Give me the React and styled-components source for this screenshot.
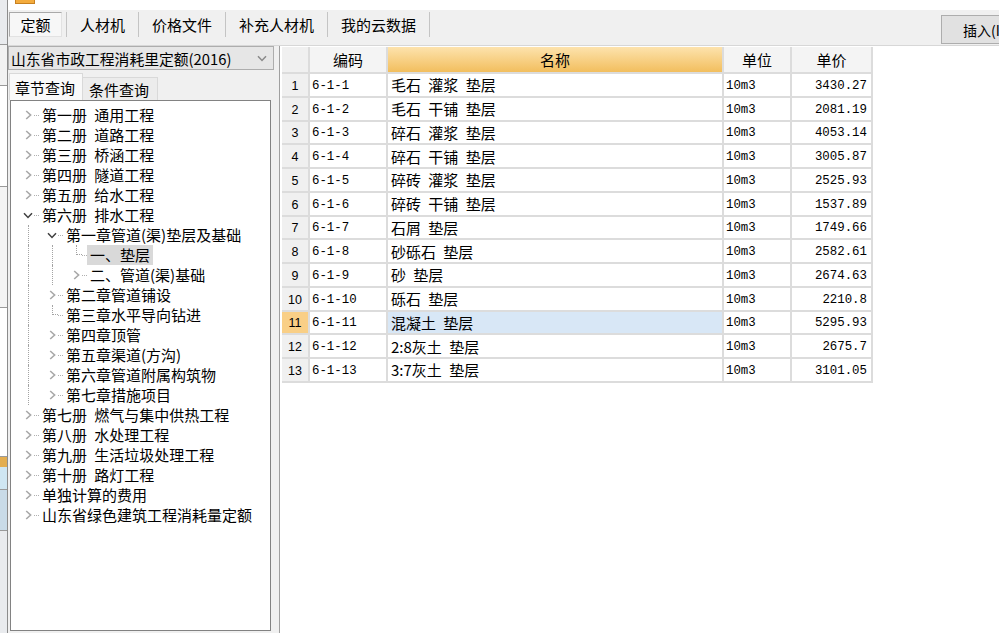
import React from "react";
import styled, { createGlobalStyle, css } from "styled-components";

const GlobalStyle = createGlobalStyle`
  html, body {
    margin: 0;
    padding: 0;
    overflow: hidden;
    background: #ffffff;
  }
  body {
    font-family: "Noto Sans CJK SC", "Noto Sans", sans-serif;
    color: #000;
  }
`;

const CJK = `"Noto Sans CJK SC", "Noto Sans", sans-serif`;
const MONO = `"Liberation Mono", "DejaVu Sans Mono", monospace`;

const Screen = styled.div`
  display: flex;
  width: 999px;
  height: 633px;
  overflow: hidden;
`;

const BackdropStrip = styled.div`
  width: 7px;
  flex-shrink: 0;
  display: flex;
  flex-direction: column;
  background: #e9ebee;
  border-right: 1px solid #8c8c8c;
`;

const StripBand = styled.div`
  height: ${({ $h }) => $h}px;
  flex-shrink: 0;
  background: ${({ $color }) => $color};
  border-bottom: ${({ $line }) => ($line ? "1px solid #9a9a9a" : "none")};
`;

const Dialog = styled.div`
  flex: 1;
  min-width: 0;
  display: flex;
  flex-direction: column;
`;

const TitleStrip = styled.div`
  height: 10px;
  flex-shrink: 0;
  background: #fff;
  padding-left: 7px;
`;

const AppIcon = styled.div`
  width: 18px;
  height: 3px;
  background: #f3ab3d;
  border: 1px solid #c7801f;
  border-top: none;
`;

const Toolbar = styled.div`
  height: 36px;
  flex-shrink: 0;
  display: flex;
  align-items: flex-start;
  padding: 2px 0 0 1px;
  box-sizing: border-box;
  background: #f0f0f0;
  border-bottom: 1px solid #d7d7d7;
  overflow: hidden;
`;

const ModeTab = styled.div`
  height: 25px;
  box-sizing: border-box;
  display: flex;
  align-items: center;
  justify-content: center;
  padding: 0 13px;
  font-family: ${CJK};
  font-size: 15px;
  white-space: nowrap;
  ${({ $active }) =>
    $active &&
    css`
      width: 53px;
      padding: 0;
      margin-right: 4px;
      background: #f7f7f7;
      border: 1px solid #a9a9a9;
      border-right-color: #e2e2e2;
      border-bottom-color: #e2e2e2;
    `}
`;

const TabDivider = styled.div`
  width: 1px;
  height: 25px;
  background: #c4c4c4;
  flex-shrink: 0;
`;

const InsertButton = styled.div`
  margin-left: auto;
  margin-top: 3px;
  margin-right: -24px;
  width: 82px;
  height: 29px;
  box-sizing: border-box;
  display: flex;
  align-items: center;
  padding-left: 21px;
  background: #e1e1e1;
  border: 1px solid #adadad;
  font-family: ${CJK};
  font-size: 14px;
  white-space: nowrap;
  flex-shrink: 0;
`;

const Body = styled.div`
  flex: 1;
  min-height: 0;
  display: flex;
`;

const LeftPanel = styled.div`
  width: 271px;
  flex-shrink: 0;
  display: flex;
  flex-direction: column;
  background: #f0f0f0;
  padding-right: 5px;
  box-sizing: border-box;
`;

const Select = styled.div`
  height: 24px;
  box-sizing: border-box;
  display: flex;
  align-items: center;
  justify-content: space-between;
  padding: 0 6px 0 2px;
  background: #e6e6e6;
  border: 1px solid #adadad;
  font-family: ${CJK};
  font-size: 14.8px;
  white-space: nowrap;
`;

const PanelTabs = styled.div`
  display: flex;
  align-items: flex-end;
  height: 27px;
  margin-top: 3px;
  padding-left: 1px;
`;

const PanelTab = styled.div`
  box-sizing: border-box;
  display: flex;
  align-items: center;
  font-family: ${CJK};
  font-size: 15px;
  white-space: nowrap;
  border: 1px solid #d9d9d9;
  border-bottom: none;
  ${({ $active }) =>
    $active
      ? css`
          height: 27px;
          padding: 0 7px 0 5px;
          background: #f9f9f9;
        `
      : css`
          height: 23px;
          padding: 0 8px 0 6px;
          background: #ececec;
          margin-left: -1px;
        `}
`;

const TabPage = styled.div`
  flex: 1;
  min-height: 0;
  display: flex;
  padding: 0 3px 2px 2px;
`;

const TreeBox = styled.div`
  flex: 1;
  background: #fff;
  border: 1px solid #828282;
  padding-top: 4px;
  overflow: hidden;
`;

const TreeRow = styled.div`
  height: 20px;
  display: flex;
  align-items: stretch;
  padding-left: 11px;
`;

const Guide = styled.div`
  width: 24px;
  flex-shrink: 0;
  &::before {
    content: "";
    display: ${({ $line }) => ($line ? "block" : "none")};
    margin-left: 6px;
    height: 100%;
    border-left: 1px dotted #a3a3a3;
  }
`;

const Toggle = styled.div`
  width: 12px;
  flex-shrink: 0;
  display: flex;
  align-items: center;
  justify-content: center;
`;

const LeafLink = styled.div`
  width: 12px;
  flex-shrink: 0;
  &::before {
    content: "";
    display: block;
    margin-left: 6px;
    height: 10px;
    border-left: 1px dotted #a3a3a3;
    border-bottom: 1px dotted #a3a3a3;
    box-sizing: border-box;
  }
`;

const Stub = styled.div`
  width: 5px;
  flex-shrink: 0;
  align-self: center;
  border-top: 1px dotted #b0b0b0;
`;

const TreeLabel = styled.div`
  padding: 0 3px;
  font-family: ${CJK};
  font-size: 15px;
  line-height: 20px;
  word-spacing: 4px;
  white-space: nowrap;
  background: ${({ $selected }) => ($selected ? "#d9d9d9" : "transparent")};
`;

const TablePanel = styled.div`
  flex: 1;
  min-width: 0;
  background: #fff;
  border-left: 1px solid #a0a0a0;
  padding: 1px 0 0 2px;
`;

const Grid = styled.div`
  display: grid;
  grid-template-columns: 28px 78px 336px 68px 81px;
  grid-template-rows: 27px repeat(13, 23.75px);
  align-content: start;
`;

const cellKinds = {
  rownum: css`
    justify-content: center;
    padding-top: 2px;
    background: #f0f0f0;
    font-family: "Liberation Sans", sans-serif;
    font-size: 12.5px;
  `,
  head: css`
    justify-content: center;
    background: #f4f4f4;
    font-family: ${CJK};
    font-size: 15px;
  `,
  headActive: css`
    justify-content: center;
    background: linear-gradient(#fde3ad, #f2be5e);
    font-family: ${CJK};
    font-size: 15px;
  `,
  mono: css`
    padding: 2px 0 0 2px;
    font-family: ${MONO};
    font-size: 12.4px;
  `,
  name: css`
    padding-left: 3px;
    font-family: ${CJK};
    font-size: 15px;
    word-spacing: 4px;
  `,
  price: css`
    justify-content: flex-end;
    padding: 2px 4px 0 0;
    font-family: ${MONO};
    font-size: 12.4px;
  `,
};

const Cell = styled.div`
  display: flex;
  align-items: center;
  box-sizing: border-box;
  white-space: nowrap;
  overflow: hidden;
  border-right: 2px solid #dcdcdc;
  border-bottom: 2px solid #dcdcdc;
  ${({ $kind }) => cellKinds[$kind]}
  ${({ $hl }) => $hl}
`;

const ChevronRight = () => (
  <svg width="7" height="10" viewBox="0 0 7 10">
    <polyline points="1.2,1 5.6,5 1.2,9" fill="none" stroke="#a8a8a8" strokeWidth="1.6" />
  </svg>
);

const ChevronDown = ({ color = "#404040" }) => (
  <svg width="10" height="7" viewBox="0 0 10 7">
    <polyline points="1,1.2 5,5.4 9,1.2" fill="none" stroke={color} strokeWidth="1.5" />
  </svg>
);

const tree = [
  { d: 0, t: "第一册 通用工程", c: "closed" },
  { d: 0, t: "第二册 道路工程", c: "closed" },
  { d: 0, t: "第三册 桥涵工程", c: "closed" },
  { d: 0, t: "第四册 隧道工程", c: "closed" },
  { d: 0, t: "第五册 给水工程", c: "closed" },
  { d: 0, t: "第六册 排水工程", c: "open" },
  { d: 1, g: [true], t: "第一章管道(渠)垫层及基础", c: "open" },
  { d: 2, g: [true, true], t: "一、垫层", c: "leaf", sel: true },
  { d: 2, g: [true, true], t: "二、管道(渠)基础", c: "closed" },
  { d: 1, g: [true], t: "第二章管道铺设", c: "closed" },
  { d: 1, g: [true], t: "第三章水平导向钻进", c: "leaf" },
  { d: 1, g: [true], t: "第四章顶管", c: "closed" },
  { d: 1, g: [true], t: "第五章渠道(方沟)", c: "closed" },
  { d: 1, g: [true], t: "第六章管道附属构筑物", c: "closed" },
  { d: 1, g: [true], t: "第七章措施项目", c: "closed" },
  { d: 0, t: "第七册 燃气与集中供热工程", c: "closed" },
  { d: 0, t: "第八册 水处理工程", c: "closed" },
  { d: 0, t: "第九册 生活垃圾处理工程", c: "closed" },
  { d: 0, t: "第十册 路灯工程", c: "closed" },
  { d: 0, t: "单独计算的费用", c: "closed" },
  { d: 0, t: "山东省绿色建筑工程消耗量定额", c: "closed" },
];

const rows = [
  ["6-1-1", "毛石 灌浆 垫层", "3430.27"],
  ["6-1-2", "毛石 干铺 垫层", "2081.19"],
  ["6-1-3", "碎石 灌浆 垫层", "4053.14"],
  ["6-1-4", "碎石 干铺 垫层", "3005.87"],
  ["6-1-5", "碎砖 灌浆 垫层", "2525.93"],
  ["6-1-6", "碎砖 干铺 垫层", "1537.89"],
  ["6-1-7", "石屑 垫层", "1749.66"],
  ["6-1-8", "砂砾石 垫层", "2582.61"],
  ["6-1-9", "砂 垫层", "2674.63"],
  ["6-1-10", "砾石 垫层", "2210.8"],
  ["6-1-11", "混凝土 垫层", "5295.93"],
  ["6-1-12", "2:8灰土 垫层", "2675.7"],
  ["6-1-13", "3:7灰土 垫层", "3101.05"],
];

const orangeCell = css`
  background: #f9cf86;
`;
const blueCell = css`
  background: #d8e7f6;
`;

const TreeItem = ({ item }) => (
  <TreeRow>
    {(item.g || []).map((line, i) => (
      <Guide key={i} $line={line} />
    ))}
    {item.c === "leaf" ? (
      <LeafLink />
    ) : (
      <Toggle>{item.c === "open" ? <ChevronDown /> : <ChevronRight />}</Toggle>
    )}
    <Stub />
    <TreeLabel $selected={item.sel}>{item.t}</TreeLabel>
  </TreeRow>
);

export default function App() {
  return (
    <Screen>
      <GlobalStyle />
      <BackdropStrip>
        <StripBand $h={44} $color="#e9ebee" $line />
        <StripBand $h={40} $color="#f2f2f2" $line />
        <StripBand $h={100} $color="#ffffff" $line />
        <StripBand $h={120} $color="#f4f4f4" $line />
        <StripBand $h={148} $color="#ffffff" $line />
        <StripBand $h={10} $color="#e3ad4f" />
        <StripBand $h={22} $color="#cfe6f2" $line />
        <StripBand $h={40} $color="#c9dbe8" $line />
      </BackdropStrip>
      <Dialog>
        <TitleStrip>
          <AppIcon />
        </TitleStrip>
        <Toolbar>
          <ModeTab $active>定额</ModeTab>
          <TabDivider />
          <ModeTab>人材机</ModeTab>
          <TabDivider />
          <ModeTab>价格文件</ModeTab>
          <TabDivider />
          <ModeTab>补充人材机</ModeTab>
          <TabDivider />
          <ModeTab>我的云数据</ModeTab>
          <TabDivider />
          <InsertButton>插入(I)</InsertButton>
        </Toolbar>
        <Body>
          <LeftPanel>
            <Select>
              <span>山东省市政工程消耗里定额(2016)</span>
              <ChevronDown color="#8a8a8a" />
            </Select>
            <PanelTabs>
              <PanelTab $active>章节查询</PanelTab>
              <PanelTab>条件查询</PanelTab>
            </PanelTabs>
            <TabPage>
              <TreeBox>
                {tree.map((item) => (
                  <TreeItem key={item.t} item={item} />
                ))}
              </TreeBox>
            </TabPage>
          </LeftPanel>
          <TablePanel>
            <Grid>
              <Cell $kind="rownum" />
              <Cell $kind="head">编码</Cell>
              <Cell $kind="headActive">名称</Cell>
              <Cell $kind="head">单位</Cell>
              <Cell $kind="head">单价</Cell>
              {rows.map(([code, name, price], i) => {
                const hl = i === 10;
                return (
                  <React.Fragment key={code}>
                    <Cell $kind="rownum" $hl={hl ? orangeCell : null}>
                      {i + 1}
                    </Cell>
                    <Cell $kind="mono">{code}</Cell>
                    <Cell $kind="name" $hl={hl ? blueCell : null}>
                      {name}
                    </Cell>
                    <Cell $kind="mono">10m3</Cell>
                    <Cell $kind="price">{price}</Cell>
                  </React.Fragment>
                );
              })}
            </Grid>
          </TablePanel>
        </Body>
      </Dialog>
    </Screen>
  );
}
